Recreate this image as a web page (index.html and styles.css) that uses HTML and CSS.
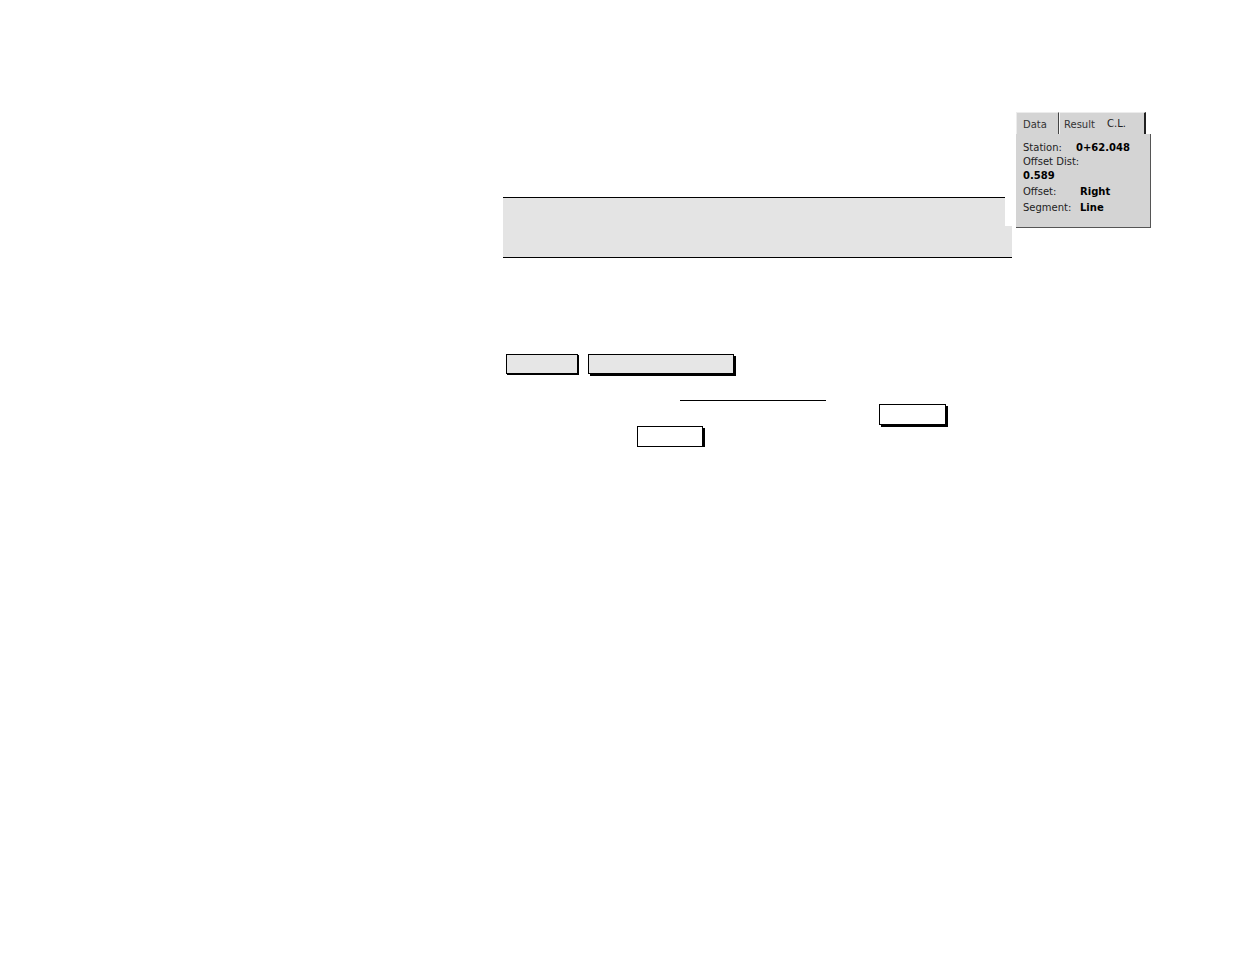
FILE: index.html
```html
<!DOCTYPE html>
<html>
<head>
<meta charset="utf-8">
<link rel="stylesheet" href="styles.css">
</head>
<body>
<div class="page">
  <div class="main">
    <div class="band">
      <div class="band-top"></div>
      <div class="band-bottom"></div>
    </div>
    <div class="btn-row">
      <div class="btn btn-a"></div>
      <div class="btn btn-b"></div>
    </div>
    <div class="line1">
      <div class="underline"></div>
      <div class="btn btn-c"></div>
    </div>
    <div class="line2">
      <div class="btn btn-d"></div>
    </div>
  </div>
  <div class="panel">
    <div class="tabs">
      <div class="tab tab-data">Data</div>
      <div class="tab tab-result">Result</div>
      <div class="tab tab-cl">C.L.</div>
    </div>
    <div class="panel-body">
      <div class="row r1"><span class="lbl w53">Station:</span><span class="val">0+62.048</span></div>
      <div class="row r2"><span class="lbl">Offset Dist:</span></div>
      <div class="row r3"><span class="val">0.589</span></div>
      <div class="row r4"><span class="lbl w57">Offset:</span><span class="val">Right</span></div>
      <div class="row r5"><span class="lbl w57">Segment:</span><span class="val">Line</span></div>
    </div>
  </div>
</div>
</body>
</html>
```
FILE: styles.css
```css
html, body {
  margin: 0;
  padding: 0;
  background: #ffffff;
}
.page {
  display: flex;
  align-items: flex-start;
  padding-left: 503px;
}
.main {
  width: 509px;
  padding-top: 197px;
}
.band {
  border-bottom: 1px solid #000;
}
.band-top {
  width: 502px;
  height: 28px;
  border-top: 1px solid #000;
  background: #e4e4e4;
}
.band-bottom {
  width: 509px;
  height: 31px;
  background: #e4e4e4;
}
.btn-row {
  display: flex;
  margin-top: 96px;
  height: 20px;
}
.btn {
  box-sizing: border-box;
  border: 1px solid #000;
  background: #fff;
}
.btn-a {
  margin-left: 3px;
  width: 72px;
  height: 20px;
  background: #e6e6e6;
  box-shadow: 1px 1px 0 #000;
}
.btn-b {
  margin-left: 10px;
  width: 146px;
  height: 20px;
  background: #e6e6e6;
  box-shadow: 2px 2px 0 #000;
}
.line1 {
  display: flex;
  align-items: flex-start;
  margin-top: 26px;
  height: 25px;
}
.underline {
  margin-left: 177px;
  width: 146px;
  height: 0;
  border-top: 1px solid #000;
}
.btn-c {
  margin-left: 53px;
  margin-top: 4px;
  width: 67px;
  height: 21px;
  box-shadow: 2px 2px 0 #000;
}
.line2 {
  display: flex;
  margin-top: 1px;
}
.btn-d {
  margin-left: 134px;
  width: 66px;
  height: 21px;
  box-shadow: 2px 2px 0 #000;
}
.panel {
  margin-left: 4px;
  margin-top: 112px;
  width: 135px;
  font-family: "DejaVu Sans", sans-serif;
  font-size: 10px;
  color: #111;
}
.tabs {
  display: flex;
  height: 22px;
}
.tab {
  box-sizing: border-box;
  height: 22px;
  background: #d4d4d4;
  line-height: 22px;
  padding-top: 1px;
  color: #333;
}
.tab-data {
  width: 43px;
  padding-left: 6px;
  border-top: 1px solid #ececec;
  border-left: 1px solid #ececec;
  border-right: 1px solid #444;
}
.tab-result {
  width: 41px;
  padding-left: 4px;
  border-top: 1px solid #ececec;
  border-left: 1px solid #f4f4f4;
}
.tab-cl {
  width: 46px;
  padding-left: 7px;
  padding-top: 0;
  border-top: 1px solid #ececec;
  border-right: 2px solid #222;
  color: #222;
}
.panel-body {
  box-sizing: border-box;
  height: 94px;
  background: #d4d4d4;
  border-right: 1px solid #555;
  border-bottom: 1px solid #555;
  padding-left: 7px;
  padding-top: 7px;
}
.row {
  display: flex;
  height: 14px;
  line-height: 14px;
  white-space: nowrap;
}
.r4 {
  margin-top: 1px;
  height: 16px;
  line-height: 16px;
}
.r5 {
  height: 16px;
  line-height: 16px;
}
.lbl {
  color: #222;
}
.w53 { width: 53px; }
.w57 { width: 57px; }
.val {
  font-weight: bold;
  color: #000;
}
```
